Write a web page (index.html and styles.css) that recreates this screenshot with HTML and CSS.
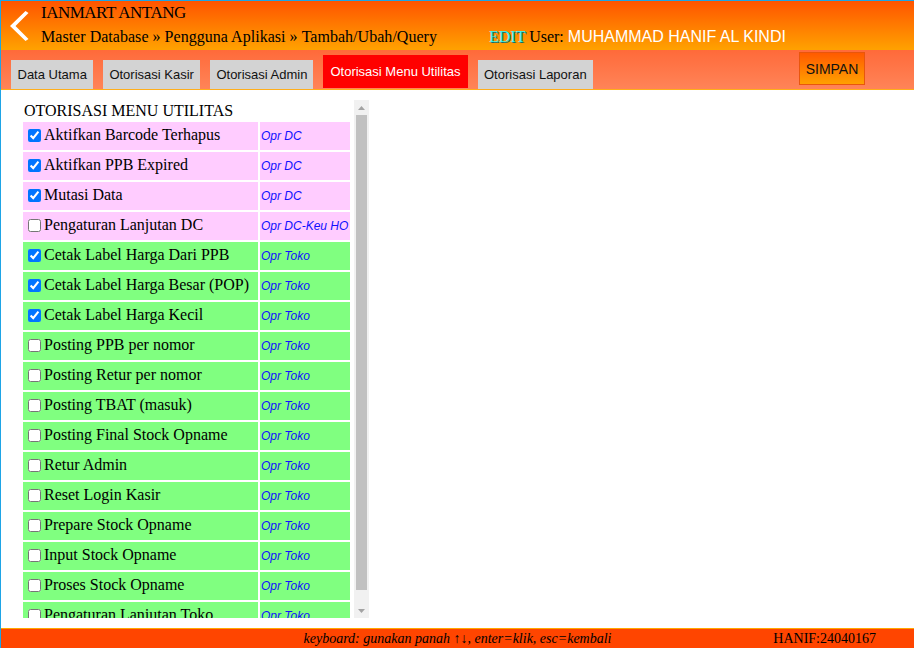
FILE: index.html
```html
<!DOCTYPE html>
<html lang="id">
<head>
<meta charset="utf-8">
<title>Pengguna Aplikasi</title>
<link rel="stylesheet" href="styles.css">
</head>
<body>
<div class="page">
  <header class="header">
    <div class="back">
      <svg width="22" height="32" viewBox="0 0 22 32" aria-hidden="true">
        <polygon points="17.5,1 20.5,3 7.5,16 20.5,29 17.5,31 2,16" fill="#fff"/>
      </svg>
    </div>
    <div class="titles">
      <div class="title">IANMART ANTANG</div>
      <div class="crumbs">
        <span class="path">Master Database&nbsp;»&nbsp;Pengguna Aplikasi&nbsp;»&nbsp;Tambah/Ubah/Query</span>
        <span class="mode">EDIT</span> User: <span class="user">MUHAMMAD HANIF AL KINDI</span>
      </div>
    </div>
  </header>
  <nav class="tabbar">
    <div class="tab">Data Utama</div>
    <div class="tab">Otorisasi Kasir</div>
    <div class="tab">Otorisasi Admin</div>
    <div class="tab active">Otorisasi Menu Utilitas</div>
    <div class="tab">Otorisasi Laporan</div>
    <div class="spacer"></div>
    <button class="save">SIMPAN</button>
  </nav>
  <main class="content">
    <div class="scrollwrap">
      <div class="scrollbox">
        <div class="heading">OTORISASI MENU UTILITAS</div>
        <table class="menu">
          <tr class="pink"><td class="name"><input type="checkbox" checked>Aktifkan Barcode Terhapus</td><td class="role">Opr DC</td></tr>
          <tr class="pink"><td class="name"><input type="checkbox" checked>Aktifkan PPB Expired</td><td class="role">Opr DC</td></tr>
          <tr class="pink"><td class="name"><input type="checkbox" checked>Mutasi Data</td><td class="role">Opr DC</td></tr>
          <tr class="pink"><td class="name"><input type="checkbox">Pengaturan Lanjutan DC</td><td class="role">Opr DC-Keu HO</td></tr>
          <tr class="green"><td class="name"><input type="checkbox" checked>Cetak Label Harga Dari PPB</td><td class="role">Opr Toko</td></tr>
          <tr class="green"><td class="name"><input type="checkbox" checked>Cetak Label Harga Besar (POP)</td><td class="role">Opr Toko</td></tr>
          <tr class="green"><td class="name"><input type="checkbox" checked>Cetak Label Harga Kecil</td><td class="role">Opr Toko</td></tr>
          <tr class="green"><td class="name"><input type="checkbox">Posting PPB per nomor</td><td class="role">Opr Toko</td></tr>
          <tr class="green"><td class="name"><input type="checkbox">Posting Retur per nomor</td><td class="role">Opr Toko</td></tr>
          <tr class="green"><td class="name"><input type="checkbox">Posting TBAT (masuk)</td><td class="role">Opr Toko</td></tr>
          <tr class="green"><td class="name"><input type="checkbox">Posting Final Stock Opname</td><td class="role">Opr Toko</td></tr>
          <tr class="green"><td class="name"><input type="checkbox">Retur Admin</td><td class="role">Opr Toko</td></tr>
          <tr class="green"><td class="name"><input type="checkbox">Reset Login Kasir</td><td class="role">Opr Toko</td></tr>
          <tr class="green"><td class="name"><input type="checkbox">Prepare Stock Opname</td><td class="role">Opr Toko</td></tr>
          <tr class="green"><td class="name"><input type="checkbox">Input Stock Opname</td><td class="role">Opr Toko</td></tr>
          <tr class="green"><td class="name"><input type="checkbox">Proses Stock Opname</td><td class="role">Opr Toko</td></tr>
          <tr class="green"><td class="name"><input type="checkbox">Pengaturan Lanjutan Toko</td><td class="role">Opr Toko</td></tr>
        </table>
      </div>
      <div class="vscroll" aria-hidden="true">
        <div class="sbtn">
          <svg width="7" height="4" viewBox="0 0 7 4"><polygon points="3.5,0 7,4 0,4" fill="#a3a3a3"/></svg>
        </div>
        <div class="strack"><div class="sthumb"></div></div>
        <div class="sbtn">
          <svg width="7" height="4" viewBox="0 0 7 4"><polygon points="0,0 7,0 3.5,4" fill="#a3a3a3"/></svg>
        </div>
      </div>
    </div>
  </main>
  <footer class="footer">
    <div></div>
    <div class="keys">keyboard: gunakan panah ↑↓, enter=klik, esc=kembali</div>
    <div class="who">HANIF:24040167</div>
  </footer>
</div>
</body>
</html>
```

FILE: styles.css
```css
* { box-sizing: border-box; }
html, body {
  margin: 0;
  padding: 0;
  height: 100%;
  overflow: hidden;
}
body {
  font-family: "Liberation Serif", "Times New Roman", serif;
  font-size: 16px;
  color: #000;
  background: #fff;
}
.page {
  height: 648px;
  width: 914px;
  border-top: 1px solid #1ea4e6;
  border-left: 1px solid #1ea4e6;
  display: flex;
  flex-direction: column;
}
.header {
  height: 49px;
  flex: none;
  display: flex;
  background: linear-gradient(#ff5400, #ffa200);
}
.back {
  width: 40px;
  padding: 9px 0 0 7px;
}
.back svg { display: block; }
.titles {
  padding-top: 2px;
  display: flex;
  flex-direction: column;
}
.title {
  font-size: 17px;
  line-height: 20px;
  letter-spacing: -0.5px;
}
.crumbs {
  margin-top: 2px;
  font-size: 16px;
  line-height: 24px;
  white-space: nowrap;
}
.path { margin-right: 48px; letter-spacing: 0.03px; }
.mode {
  color: #3ff2ee;
  text-shadow: 1px 1px 0 #0b6f70;
}
.user {
  font-family: "Liberation Sans", Arial, sans-serif;
  color: #fff;
}
.tabbar {
  height: 40px;
  flex: none;
  display: flex;
  align-items: flex-end;
  gap: 10px;
  padding-left: 10px;
  padding-right: 49px;
  background: linear-gradient(#ff6a3a, #ff8458);
  border-bottom: 1px solid #ffae1a;
}
.tab {
  height: 29px;
  line-height: 30px;
  padding: 0 6px 0 6.5px;
  background: #d3d3d3;
  font-family: "Liberation Sans", Arial, sans-serif;
  font-size: 13px;
  color: #111;
  white-space: nowrap;
}
.tab.active {
  height: 33px;
  line-height: 33px;
  padding: 0 7px;
  align-self: flex-start;
  margin-top: 5px;
  background: #ff0000;
  color: #fff;
}
.spacer { flex: 1; }
.save {
  align-self: flex-start;
  margin-top: 2px;
  height: 33px;
  width: 66px;
  padding: 0;
  border: 1px solid #e8560c;
  background: linear-gradient(#ff5a00, #ffa000);
  font-family: "Liberation Sans", Arial, sans-serif;
  font-size: 14px;
  color: #111;
}
.content {
  flex: 1;
  padding: 10px 0 10px 20px;
}
.scrollwrap {
  width: 348px;
  height: 518px;
  display: flex;
}
.scrollbox {
  width: 333px;
  height: 518px;
  overflow: hidden;
}
.vscroll {
  width: 15px;
  display: flex;
  flex-direction: column;
  background: #f1f1f1;
}
.sbtn {
  height: 15px;
  flex: none;
  display: flex;
  align-items: center;
  justify-content: center;
}
.sbtn svg { display: block; }
.strack {
  flex: 1;
  padding: 0 2px 13px;
  display: flex;
  flex-direction: column;
}
.sthumb {
  flex: 1;
  background: #c1c1c1;
}
.heading {
  padding: 2px 0 0 3px;
  line-height: 18px;
}
.menu {
  width: 331px;
  table-layout: fixed;
  border-collapse: separate;
  border-spacing: 2px;
}
.menu td {
  height: 28px;
  padding: 0 1px 2px;
  vertical-align: middle;
  white-space: nowrap;
  overflow: hidden;
}
.menu td.name { width: 235px; }
.menu td.role {
  width: 90px;
  padding-bottom: 1px;
  font-family: "Liberation Sans", Arial, sans-serif;
  font-style: italic;
  font-size: 12px;
  color: #1010ff;
}
.menu input {
  margin: 3px 3px 3px 4px;
  vertical-align: -2px;
}
.pink td { background: #ffccff; }
.green td { background: #80ff80; }
.footer {
  height: 20px;
  flex: none;
  display: grid;
  grid-template-columns: 1fr auto 1fr;
  background: #ff4500;
  border-top: 1px solid #ffa500;
  font-size: 14px;
  line-height: 19px;
}
.keys { font-style: italic; }
.who {
  text-align: right;
  padding-right: 38px;
}
```
